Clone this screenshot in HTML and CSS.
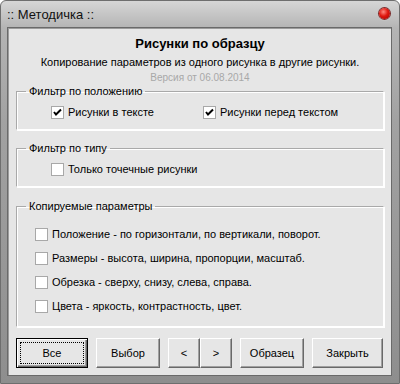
FILE: index.html
```html
<!DOCTYPE html>
<html lang="ru">
<head>
    <meta charset="UTF-8">
    <title>Методичка</title>
    <link rel="stylesheet" href="styles.css">
</head>
<body>
    <div class="window">
        <div class="titlebar">
            <span class="title">:: Методичка ::</span>
            <span class="close"></span>
        </div>
        <div class="client">
            <div class="header">
                <h1>Рисунки по образцу</h1>
                <p class="subtitle">Копирование параметров из одного рисунка в другие рисунки.</p>
                <p class="version">Версия от 06.08.2014</p>
            </div>

            <!-- Фильтр по положению -->
            <fieldset class="group group-pos">
                <legend>Фильтр по положению</legend>
                <div class="row">
                    <label class="check-item wide"><span class="box checked"><svg width="11" height="11" viewBox="0 0 11 11"><path d="M2 5 L4 7.5 L9 2.5" fill="none" stroke="#000" stroke-width="2"/></svg></span>Рисунки в тексте</label>
                    <label class="check-item"><span class="box checked"><svg width="11" height="11" viewBox="0 0 11 11"><path d="M2 5 L4 7.5 L9 2.5" fill="none" stroke="#000" stroke-width="2"/></svg></span>Рисунки перед текстом</label>
                </div>
            </fieldset>

            <!-- Фильтр по типу -->
            <fieldset class="group group-type">
                <legend>Фильтр по типу</legend>
                <div class="row">
                    <label class="check-item"><span class="box"></span>Только точечные рисунки</label>
                </div>
            </fieldset>

            <!-- Копируемые параметры -->
            <fieldset class="group group-params">
                <legend>Копируемые параметры</legend>
                <div class="list">
                    <label class="check-item"><span class="box"></span>Положение - по горизонтали, по вертикали, поворот.</label>
                    <label class="check-item"><span class="box"></span>Размеры - высота, ширина, пропорции, масштаб.</label>
                    <label class="check-item"><span class="box"></span>Обрезка - сверху, снизу, слева, справа.</label>
                    <label class="check-item"><span class="box"></span>Цвета - яркость, контрастность, цвет.</label>
                </div>
            </fieldset>

            <div class="buttons">
                <button type="button" class="btn btn-default btn-all">Все</button>
                <button type="button" class="btn btn-mid">Выбор</button>
                <div class="nav-pair">
                    <button type="button" class="btn btn-small">&lt;</button>
                    <button type="button" class="btn btn-small">&gt;</button>
                </div>
                <button type="button" class="btn btn-mid">Образец</button>
                <button type="button" class="btn btn-close">Закрыть</button>
            </div>
        </div>
    </div>
</body>
</html>
```

FILE: styles.css
```css
body {
    margin: 0;
    padding: 0;
    font-family: 'Liberation Sans', Arial, sans-serif;
    font-size: 11px;
    color: #000;
    background: #fff;
}
.window {
    width: 400px;
    height: 384px;
    box-sizing: border-box;
    display: flex;
    flex-direction: column;
    border: 1px solid #6e6e6e;
    border-radius: 6px 6px 0 0;
    background: linear-gradient(#d6d6d6, #b4b4b4 27px, #a2a2a2 120px, #8e8e8e);
}
.titlebar {
    height: 26px;
    display: flex;
    align-items: center;
    justify-content: space-between;
    padding: 0 9px 0 6px;
}
.title {
    font-size: 13px;
    color: #111;
    margin-top: 1px;
}
.close {
    width: 11px;
    height: 11px;
    border-radius: 50%;
    background: radial-gradient(circle at 40% 35%, #ff8a80, #e0180f 45%, #a00000);
    box-shadow: 0 0 0 1px #7a2a2a, 0 1px 1px #fff;
    margin-top: -2px;
}
.client {
    flex: 1;
    margin: 0 7px 7px 6px;
    background: #e6e6e6;
    border: 1px solid #6a6a6a;
    box-shadow: inset 1px 1px 0 #9c9c9c;
    padding: 1px 7px 0 8px;
    display: flex;
    flex-direction: column;
}
.header {
    text-align: center;
}
.header h1 {
    margin: 7px 0 0;
    font-size: 13px;
    line-height: 16px;
    font-weight: bold;
}
.subtitle {
    margin: 2px 0 0;
    line-height: 16px;
}
.version {
    margin: 1px 0 0;
    font-size: 10px;
    line-height: 14px;
    color: #a8a8a8;
}
.group {
    margin: 0;
    padding: 0;
    border: 1px solid;
    border-color: #a9a9a9 #fff #fff #a9a9a9;
    box-shadow: inset 1px 1px 0 #fff, 1px 1px 0 #fff;
    min-width: 0;
}
.group legend {
    margin-left: 9px;
    padding: 0 3px;
    line-height: 14px;
}
.group-pos {
    margin-top: -1px;
}
.group-type {
    margin-top: 11px;
}
.group-params {
    margin-top: 12px;
}
.row {
    display: flex;
    padding: 6px 0 9px 34px;
}
.list {
    display: flex;
    flex-direction: column;
    gap: 8px;
    padding: 13px 0 12px 18px;
}
.check-item {
    display: flex;
    align-items: center;
    height: 16px;
    white-space: nowrap;
}
.check-item.wide {
    width: 152px;
}
.box {
    width: 11px;
    height: 11px;
    flex: none;
    margin-right: 4px;
    background: #fff;
    border: 1px solid #a8a8a8;
    display: flex;
    align-items: center;
    justify-content: center;
}
.buttons {
    margin-top: 11px;
    display: flex;
    gap: 8px;
}
.nav-pair {
    display: flex;
}
.btn {
    height: 30px;
    padding: 0;
    font-family: inherit;
    font-size: 11px;
    color: #000;
    background: #e6e6e6;
    border: 1px solid;
    border-color: #fff #696969 #696969 #fff;
    box-shadow: inset -1px -1px 0 #a0a0a0;
    cursor: pointer;
}
.btn-default {
    border-color: #000;
    box-shadow: inset 1px 1px 0 #fff, inset -1px -1px 0 #696969, inset -2px -2px 0 #a0a0a0;
    outline: 1px dotted #000;
    outline-offset: -5px;
}
.btn-all {
    width: 72px;
}
.btn-mid {
    width: 64px;
}
.btn-small {
    width: 32px;
}
.btn-close {
    width: 71px;
}
```
